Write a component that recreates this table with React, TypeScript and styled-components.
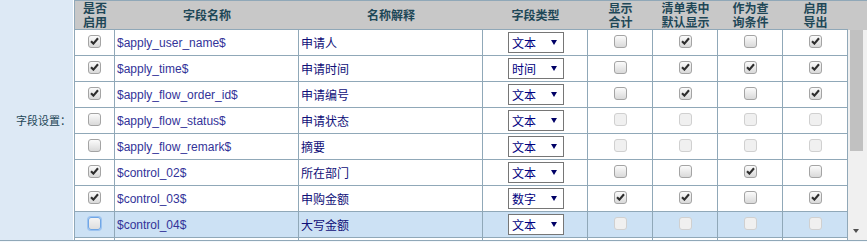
import styled, { createGlobalStyle } from 'styled-components';

const GlobalStyle = createGlobalStyle`
  html, body {
    margin: 0;
    padding: 0;
    background: #f4f8fc;
  }
  body {
    font-family: "Liberation Sans", Arial, "Noto Sans CJK SC", sans-serif;
    font-size: 12px;
  }
`;

const COLS = '40px 184px 184px 105px 65px 65px 65px 65px';
const CJK = '"Noto Sans CJK SC", "Liberation Sans", sans-serif';

interface FieldRow {
  name: string;
  label: string;
  type: string;
  on: boolean;
  flags: boolean[];
  active?: boolean;
}

const rows: FieldRow[] = [
  { name: '$apply_user_name$', label: '申请人', type: '文本', on: true, flags: [false, true, false, true] },
  { name: '$apply_time$', label: '申请时间', type: '时间', on: true, flags: [false, true, true, true] },
  { name: '$apply_flow_order_id$', label: '申请编号', type: '文本', on: true, flags: [false, true, false, true] },
  { name: '$apply_flow_status$', label: '申请状态', type: '文本', on: false, flags: [false, false, false, false] },
  { name: '$apply_flow_remark$', label: '摘要', type: '文本', on: false, flags: [false, false, false, false] },
  { name: '$control_02$', label: '所在部门', type: '文本', on: true, flags: [false, false, true, false] },
  { name: '$control_03$', label: '申购金额', type: '数字', on: true, flags: [true, true, false, true] },
  { name: '$control_04$', label: '大写金额', type: '文本', on: false, flags: [false, false, false, false], active: true },
];

const headers = [
  ['是否', '启用'],
  ['字段名称'],
  ['名称解释'],
  ['字段类型'],
  ['显示', '合计'],
  ['清单表中', '默认显示'],
  ['作为查', '询条件'],
  ['启用', '导出'],
];

const Check = ({ checked, disabled, focus }: { checked?: boolean; disabled?: boolean; focus?: boolean }) => (
  <Box $disabled={disabled} $focus={focus}>
    {checked && (
      <svg width="9" height="8" viewBox="0 0 9 8">
        <path d="M1 4.2 L3.4 6.6 L8 1.2" fill="none" stroke="#2e2e2e" strokeWidth="2.1" />
      </svg>
    )}
  </Box>
);

const App = () => {
  return (
    <>
      <GlobalStyle />
      <Frame>
        <LabelCell>字段设置：</LabelCell>
        <Pane>
          <HeaderRow>
            {headers.map((lines, i) => (
              <HeaderCell key={i}>
                {lines.map((l, j) => (
                  <span key={j}>{l}</span>
                ))}
              </HeaderCell>
            ))}
            <HeaderFiller />
          </HeaderRow>
          <Body>
            <Rows>
              {rows.map((r, i) => (
                <Row key={i} $active={r.active}>
                  <Cell $align="center">
                    <Check checked={r.on} focus={r.active} />
                  </Cell>
                  <Cell>
                    <FieldName>{r.name}</FieldName>
                  </Cell>
                  <Cell>
                    <FieldLabel>{r.label}</FieldLabel>
                  </Cell>
                  <Cell $align="center">
                    <SelectBox>
                      <span>{r.type}</span>
                      <SelectArrow />
                    </SelectBox>
                  </Cell>
                  {r.flags.map((f, j) => (
                    <Cell key={j} $align="center">
                      <Check checked={f} disabled={!r.on} />
                    </Cell>
                  ))}
                </Row>
              ))}
              {/* next row, only its top edge is scrolled into view */}
              <Row>
                {headers.map((_, i) => (
                  <Cell key={i} />
                ))}
              </Row>
            </Rows>
            <ScrollBar>
              <Thumb />
              <Track />
              <DownArrow />
            </ScrollBar>
          </Body>
        </Pane>
      </Frame>
    </>
  );
};

const Frame = styled.div`
  display: flex;
  width: 867px;
  height: 240px;
  border-bottom: 1px solid #90a8b8;
`;

const LabelCell = styled.div`
  box-sizing: border-box;
  width: 74px;
  flex-shrink: 0;
  background: #dde9f5;
  border-right: 1px solid #ffffff;
  display: flex;
  align-items: center;
  justify-content: flex-end;
  padding-right: 2px;
  font-family: ${CJK};
  font-size: 11px;
  color: #1e4757;
`;

const Pane = styled.div`
  box-sizing: border-box;
  flex: 1;
  display: flex;
  flex-direction: column;
  border-left: 1px solid #90a8b8;
  min-width: 0;
`;

const HeaderRow = styled.div`
  display: grid;
  grid-template-columns: ${COLS} 1fr;
  border-top: 1px solid #90a8b8;
  background: #c8c8c8;
`;

const HeaderCell = styled.div`
  box-sizing: border-box;
  height: 29px;
  border-bottom: 1px solid #90a8b8;
  display: flex;
  flex-direction: column;
  align-items: center;
  justify-content: center;
  font-family: ${CJK};
  font-size: 12px;
  font-weight: bold;
  line-height: 14px;
  color: #1e4757;
  text-align: center;
`;

const HeaderFiller = styled.div`
  height: 29px;
`;

const Body = styled.div`
  flex: 1;
  display: flex;
  overflow: hidden;
`;

const Rows = styled.div`
  width: 773px;
  flex-shrink: 0;
`;

const Row = styled.div<{ $active?: boolean }>`
  box-sizing: border-box;
  display: grid;
  grid-template-columns: ${COLS};
  height: 26px;
  border-bottom: 1px solid #90a8b8;
  background: ${(p) => (p.$active ? '#cce1f4' : '#ffffff')};
`;

const Cell = styled.div<{ $align?: 'center' | 'left' }>`
  box-sizing: border-box;
  border-right: 1px solid #90a8b8;
  display: flex;
  align-items: center;
  justify-content: ${(p) => (p.$align === 'center' ? 'center' : 'flex-start')};
  padding-left: ${(p) => (p.$align === 'center' ? '0' : '2px')};
  overflow: hidden;
  white-space: nowrap;
`;

const FieldName = styled.span`
  font-family: "Liberation Sans", Arial, sans-serif;
  font-size: 12px;
  color: #333399;
`;

const FieldLabel = styled.span`
  font-family: ${CJK};
  font-size: 12px;
  color: #0f0f78;
`;

const Box = styled.span<{ $disabled?: boolean; $focus?: boolean }>`
  box-sizing: border-box;
  width: 13px;
  height: 13px;
  margin-bottom: 3px;
  border-radius: 3px;
  border: 1px solid
    ${(p) => (p.$focus ? '#6fa6e6' : p.$disabled ? '#d0d0d0' : '#a4a4a4')};
  background: ${(p) =>
    p.$disabled ? '#f0f0f0' : p.$focus ? 'linear-gradient(#f4f4f4, #dedede)' : 'linear-gradient(#fbfbfb, #d9d9d9)'};
  box-shadow: ${(p) => (p.$focus ? '0 0 0 1px #9cc3f0' : 'none')};
  display: flex;
  align-items: center;
  justify-content: center;
`;

const SelectBox = styled.div`
  box-sizing: border-box;
  width: 56px;
  height: 21px;
  margin-left: 2px;
  border: 1px solid #767676;
  background: #ffffff;
  display: flex;
  align-items: center;
  justify-content: space-between;
  padding: 0 6px 0 3px;
  font-family: ${CJK};
  font-size: 12px;
  color: #000080;
`;

const SelectArrow = styled.span`
  width: 0;
  height: 0;
  border-left: 3px solid transparent;
  border-right: 3px solid transparent;
  border-top: 5px solid #000066;
`;

const ScrollBar = styled.div`
  flex: 1;
  display: flex;
  flex-direction: column;
  align-items: flex-start;
  background: #f0f0f0;
  padding: 0 4px 0 2px;
`;

const Thumb = styled.div`
  width: 13px;
  height: 121px;
  background: #c1c1c1;
`;

const Track = styled.div`
  flex: 1;
`;

const DownArrow = styled.span`
  margin: 0 0 7px 3px;
  width: 0;
  height: 0;
  border-left: 3.5px solid transparent;
  border-right: 3.5px solid transparent;
  border-top: 4px solid #505050;
`;

export default App;
